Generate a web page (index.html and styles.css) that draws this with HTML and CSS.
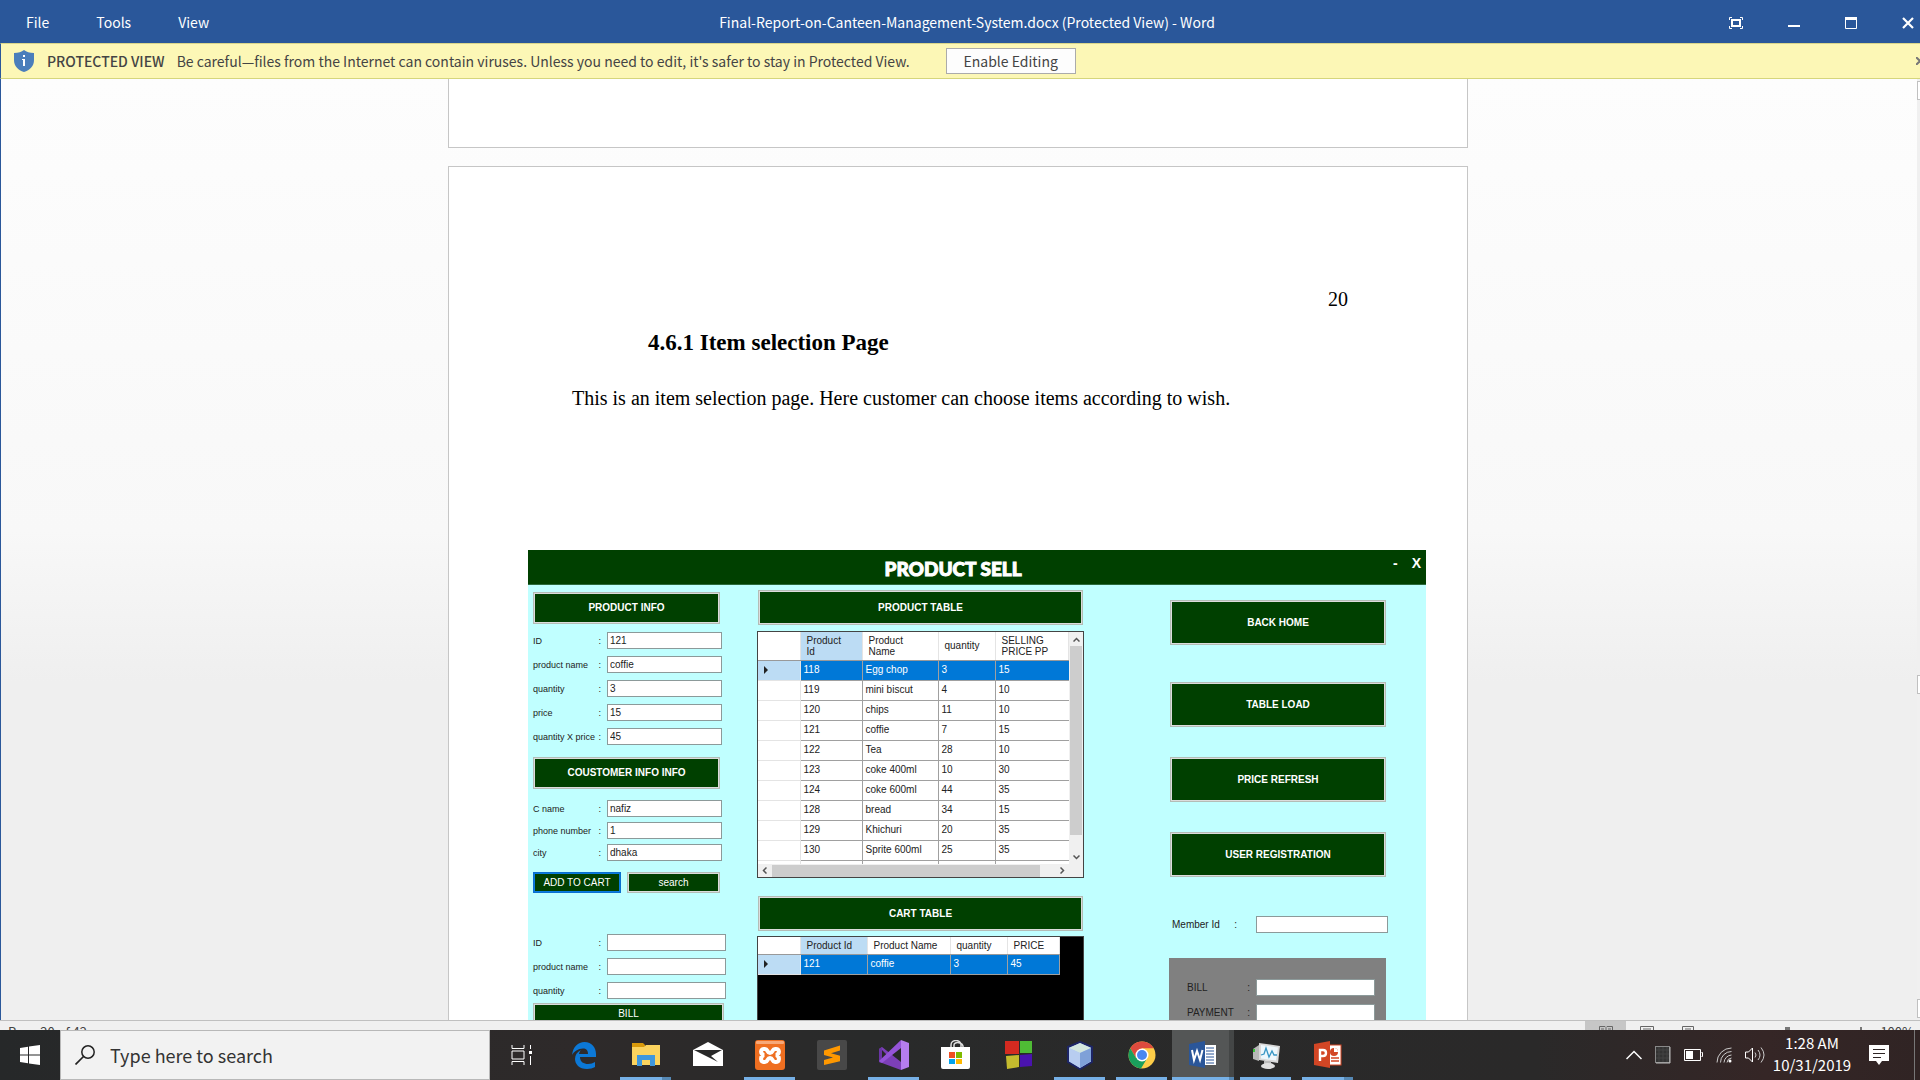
FILE: index.html
```html
<!DOCTYPE html>
<html lang="en">
<head>
<meta charset="utf-8">
<title>Final-Report-on-Canteen-Management-System.docx (Protected View) - Word</title>
<link rel="stylesheet" href="styles.css">
</head>
<body>
<div class="word">
  <header class="titlebar">
    <nav class="menu">
      <button type="button">File</button>
      <button type="button">Tools</button>
      <button type="button">View</button>
    </nav>
    <h1 class="doc-name">Final-Report-on-Canteen-Management-System.docx (Protected View) - Word</h1>
    <div class="win-controls">
      <button type="button" aria-label="Full screen"><svg width="14" height="12" viewBox="0 0 14 12"><path d="M0.5 3V.5H3M11 .5h2.500V3M13.500 9v2.500H11M3 11.500H.5V9" fill="none" stroke="#fff"/><rect x="3" y="3" width="8" height="6" fill="none" stroke="#fff" stroke-width="2"/></svg></button>
      <button type="button" aria-label="Minimize"><svg width="12" height="12" viewBox="0 0 12 12"><rect y="8" width="12" height="2" fill="#fff"/></svg></button>
      <button type="button" aria-label="Maximize"><svg width="12" height="12" viewBox="0 0 12 12"><path d="M.5 2v9.500h11V2" fill="none" stroke="#fff"/><rect width="12" height="3" fill="#fff"/></svg></button>
      <button type="button" aria-label="Close"><svg width="12" height="12" viewBox="0 0 12 12"><path d="M1 1l10 10M11 1L1 11" stroke="#fff" stroke-width="2.200"/></svg></button>
    </div>
  </header>

  <div class="message-bar">
    <svg class="shield" width="20" height="22" viewBox="0 0 20 22"><path d="M10 0c2.500 2 5.500 3 10 3v7c0 6-4 10-10 12C4 20 0 16 0 10V3c4.500 0 7.500-1 10-3z" fill="#4a7ebb"/><rect x="9" y="5" width="2" height="2" fill="#fff"/><path d="M8 9h3v7H9v-6H8z" fill="#fff"/></svg>
    <strong>PROTECTED VIEW</strong>
    <span class="warning">Be careful—files from the Internet can contain viruses. Unless you need to edit, it's safer to stay in Protected View.</span>
    <button type="button" class="enable">Enable Editing</button>
    <button type="button" class="dismiss" aria-label="Dismiss"><svg width="8" height="8" viewBox="0 0 8 8"><path d="M0 0l8 8M8 0L0 8" stroke="#777" stroke-width="2"/></svg></button>
  </div>

  <div class="workspace">
    <main class="pages">
      <section class="page page-end"></section>
      <section class="page">
        <p class="page-number">20</p>
        <h2>4.6.1 Item selection Page</h2>
        <p class="body-text">This is an item selection page. Here customer can choose items according to wish.</p>

        <div class="app">
          <div class="app-title">
            <h3>PRODUCT SELL</h3>
            <div class="app-controls"><button type="button">-</button><button type="button">X</button></div>
          </div>
          <div class="app-body">
            <div class="col-left">
              <button type="button" class="btn banner">PRODUCT INFO</button>
              <div class="fields loose">
                <label for="p-id">ID<span>:</span></label><input id="p-id" value="121">
                <label for="p-name">product name<span>:</span></label><input id="p-name" value="coffie">
                <label for="p-qty">quantity<span>:</span></label><input id="p-qty" value="3">
                <label for="p-price">price<span>:</span></label><input id="p-price" value="15">
                <label for="p-total">quantity X price<span>:</span></label><input id="p-total" value="45">
              </div>
              <button type="button" class="btn banner">COUSTOMER INFO INFO</button>
              <div class="fields">
                <label for="c-name">C name<span>:</span></label><input id="c-name" value="nafiz">
                <label for="c-phone">phone number<span>:</span></label><input id="c-phone" value="1">
                <label for="c-city">city<span>:</span></label><input id="c-city" value="dhaka">
              </div>
              <div class="actions">
                <button type="button" class="btn small focused">ADD TO CART</button>
                <button type="button" class="btn small">search</button>
              </div>
              <div class="fields loose wide">
                <label for="b-id">ID<span>:</span></label><input id="b-id">
                <label for="b-name">product name<span>:</span></label><input id="b-name">
                <label for="b-qty">quantity<span>:</span></label><input id="b-qty">
              </div>
              <button type="button" class="btn small bill">BILL</button>
            </div>

            <div class="col-mid">
              <button type="button" class="btn banner">PRODUCT TABLE</button>
              <div class="grid">
                <div class="grid-view">
                  <table class="products">
                    <colgroup><col class="w-head"><col class="w-id"><col class="w-name"><col class="w-qty"><col></colgroup>
                    <thead><tr><th></th><th class="sel">Product<br>Id</th><th>Product<br>Name</th><th>quantity</th><th>SELLING<br>PRICE PP</th></tr></thead>
                    <tbody>
                      <tr class="active"><th><i class="marker"></i></th><td>118</td><td>Egg chop</td><td>3</td><td>15</td></tr>
                      <tr><th></th><td>119</td><td>mini biscut</td><td>4</td><td>10</td></tr>
                      <tr><th></th><td>120</td><td>chips</td><td>11</td><td>10</td></tr>
                      <tr><th></th><td>121</td><td>coffie</td><td>7</td><td>15</td></tr>
                      <tr><th></th><td>122</td><td>Tea</td><td>28</td><td>10</td></tr>
                      <tr><th></th><td>123</td><td>coke 400ml</td><td>10</td><td>30</td></tr>
                      <tr><th></th><td>124</td><td>coke 600ml</td><td>44</td><td>35</td></tr>
                      <tr><th></th><td>128</td><td>bread</td><td>34</td><td>15</td></tr>
                      <tr><th></th><td>129</td><td>Khichuri</td><td>20</td><td>35</td></tr>
                      <tr><th></th><td>130</td><td>Sprite 600ml</td><td>25</td><td>35</td></tr>
                      <tr><th></th><td></td><td></td><td></td><td></td></tr>
                    </tbody>
                  </table>
                  <div class="vbar">
                    <svg width="7" height="5" viewBox="0 0 7 5"><path d="M.5 4.500l3-3 3 3" fill="none" stroke="#555" stroke-width="1.500"/></svg>
                    <div class="vthumb"></div>
                    <svg width="7" height="5" viewBox="0 0 7 5"><path d="M.5 .5l3 3 3-3" fill="none" stroke="#555" stroke-width="1.500"/></svg>
                  </div>
                </div>
                <div class="hbar">
                  <svg width="5" height="7" viewBox="0 0 5 7"><path d="M4.500 .5l-3 3 3 3" fill="none" stroke="#555" stroke-width="1.500"/></svg>
                  <div class="hthumb"></div>
                  <svg width="5" height="7" viewBox="0 0 5 7"><path d="M.5 .5l3 3-3 3" fill="none" stroke="#555" stroke-width="1.500"/></svg>
                </div>
              </div>
              <button type="button" class="btn banner">CART TABLE</button>
              <div class="grid cart-grid">
                <table class="cart">
                  <colgroup><col class="w-head"><col class="w-cid"><col class="w-cname"><col class="w-qty"><col></colgroup>
                  <thead><tr><th></th><th class="sel">Product Id</th><th>Product Name</th><th>quantity</th><th>PRICE</th></tr></thead>
                  <tbody><tr class="active"><th><i class="marker"></i></th><td>121</td><td>coffie</td><td>3</td><td>45</td></tr></tbody>
                </table>
              </div>
            </div>

            <div class="col-right">
              <button type="button" class="btn nav">BACK HOME</button>
              <button type="button" class="btn nav">TABLE LOAD</button>
              <button type="button" class="btn nav">PRICE REFRESH</button>
              <button type="button" class="btn nav">USER REGISTRATION</button>
              <div class="member"><label for="m-id">Member Id<span>:</span></label><input id="m-id"></div>
              <div class="payment">
                <label for="bill">BILL<span>:</span></label><input id="bill">
                <label for="pay">PAYMENT<span>:</span></label><input id="pay">
              </div>
            </div>
          </div>
        </div>
      </section>
    </main>
    <div class="scrollbar"><div class="s-btn"></div><div class="s-btn thumb"></div><div class="s-btn"></div></div>
  </div>

  <div class="status">
    <div class="status-row">
      <span class="status-page">Page 20 of 42</span>
      <span class="view-btn on"><svg width="14" height="12" viewBox="0 0 14 12"><path d="M.5 1.500H6l1 1 1-1h5.500V11H.5zM7 3v8M2 4h3M9 4h3" fill="none" stroke="#666"/></svg></span>
      <span class="view-btn"><svg width="14" height="12" viewBox="0 0 14 12"><path d="M.5 1.500h13V11H.5zM3 4h8" fill="none" stroke="#666"/></svg></span>
      <span class="view-btn"><svg width="12" height="12" viewBox="0 0 12 12"><path d="M.5 1.500h11V11H.5zM3 4h6" fill="none" stroke="#666"/></svg></span>
      <span class="zoom"><i class="knob"></i><i class="plus"></i></span>
      <span class="percent">100%</span>
    </div>
  </div>
</div>

<footer class="taskbar">
  <button type="button" class="start" aria-label="Start"><svg width="20" height="20" viewBox="0 0 20 20"><path d="M0 3l8-1.200V9.500H0zM9 1.600L20 0v9.500H9zM0 10.500h8v7.700L0 17zM9 10.500h11V20L9 18.400z" fill="#fff"/></svg></button>
  <label class="search">
    <svg width="20" height="20" viewBox="0 0 20 20"><circle cx="13" cy="7" r="6.200" fill="none" stroke="#222" stroke-width="1.500"/><path d="M8.500 11.500L.5 19.500" stroke="#222" stroke-width="1.700"/></svg>
    <input type="text" placeholder="Type here to search" aria-label="Search">
  </label>
  <button type="button" class="task" aria-label="Task View"><svg width="22" height="20" viewBox="0 0 22 20"><path d="M1 0v3.500h12V0M1 20v-3.500h12V20M1 6h12v8H1zM19.500 0v4M19.500 11v9" fill="none" stroke="#fff"/><rect x="18" y="6" width="3" height="3" fill="#fff"/></svg></button>
  <button type="button" class="task" aria-label="Edge"><svg width="30" height="30" viewBox="0 0 30 30"><path d="M3 15C4 7 9 2 15.500 2 23 2 27 8 27 14v3H11c0 5 4 7 8 7 3 0 5-.8 7-2v5c-2 1.300-5 2-8 2-8 0-12-5-12-10 0-4 2-7 6-9-1 1-1.600 2.300-2 4h9c0-4-2-5.500-5-5.500-5 0-9 3-11 6.500z" fill="#0c78d6"/></svg></button>
  <button type="button" class="task open multi" aria-label="File Explorer"><svg width="30" height="30" viewBox="0 0 30 30"><path d="M1 3h11l2 2v4H1z" fill="#d99a0b"/><path d="M1 7h12l2-2h14v20H1z" fill="#fbd35e"/><path d="M6 26V15h18v11h-5v-6h-8v6z" fill="#3f97dd"/></svg></button>
  <button type="button" class="task" aria-label="Mail"><svg width="30" height="30" viewBox="0 0 30 30"><path d="M0 10l15-8 15 8v16H0z" fill="#fff"/><path d="M1 10h28l-11 6 7 6L1 10z" fill="#282828"/></svg></button>
  <button type="button" class="task open" aria-label="XAMPP"><svg width="30" height="30" viewBox="0 0 30 30"><rect width="30" height="30" rx="3" fill="#ef6f21"/><rect x="1" y="1" width="28" height="3" rx="1" fill="#f7a878"/><path d="M10 9c-5-1-5 5-1 6-4 1-4 8 1 7 3 0 2-4 5-4s2 4 5 4c5 1 5-6 1-7 4-1 4-7-1-6-3 0-2 4-5 4s-2-4-5-4z" fill="none" stroke="#fff" stroke-width="4"/></svg></button>
  <button type="button" class="task" aria-label="Sublime Text"><svg width="30" height="30" viewBox="0 0 30 30"><rect width="30" height="30" rx="2" fill="#484848"/><path d="M7 10.500L23 5.500v5l-9 2.800 9 2.500v5.500L7 25v-5l9-2.500-9-2.500z" fill="#ff9800"/></svg></button>
  <button type="button" class="task open" aria-label="Visual Studio"><svg width="30" height="30" viewBox="0 0 30 30"><path d="M0 9l3-2 19 15V30L3 23l-3-1z" fill="#7c3fb8"/><path d="M0 9l3-2v16l-3-1z" fill="#6a35a5"/><path d="M3 10l5 5-5 5z" fill="#282828"/><path d="M3 23L22 8V0L0 21z" fill="#9554d8"/><path d="M22 0l8 3v24l-8 3z" fill="#b57dee"/><path d="M22 9v12l-8-6z" fill="#282828"/></svg></button>
  <button type="button" class="task" aria-label="Store"><svg width="30" height="30" viewBox="0 0 30 30"><path d="M10 9V5c0-6 10-6 10 0v4M13 9V5c0-4 10-3 9 3" fill="none" stroke="#ddd" stroke-width="1.500"/><path d="M0 7h29v20q0 2-2 2H2q-2 0-2-2z" fill="#fff"/><path d="M8 12h6v6H8z" fill="#f04e23"/><path d="M15 12h6v6h-6z" fill="#7fba00"/><path d="M8 19h6v5H8z" fill="#00a3ee"/><path d="M15 19h6v5h-6z" fill="#ffb900"/></svg></button>
  <button type="button" class="task" aria-label="Code Blocks"><svg width="30" height="30" viewBox="0 0 30 30"><path d="M2 1h14v13H2z" fill="#d42a20"/><path d="M17 1h12v12H17z" fill="#4fbb35"/><path d="M3 16l13-1v12L4 29z" fill="#c4bb2e"/><path d="M17 15l12-1v12l-12 1z" fill="#4a13ae"/></svg></button>
  <button type="button" class="task open" aria-label="NetBeans"><svg width="30" height="30" viewBox="0 0 30 30"><path d="M15 2l12 5v15l-12 7-12-7V7z" fill="#a9c6ee" stroke="#1d2565" stroke-width="2"/><path d="M15 3l11 5-11 5L4 8z" fill="#d3e6df"/><path d="M4 8l11 5v15L4 21z" fill="#b8cdf0"/><path d="M26 8l-11 5v15l11-7z" fill="#7fa1d8"/></svg></button>
  <button type="button" class="task open" aria-label="Chrome"><svg width="30" height="30" viewBox="0 0 30 30"><circle cx="15" cy="15" r="13.500" fill="#fdcd48"/><path d="M15 1.500A13.500 13.500 0 0 1 26.700 8.200H15L9 18 3.300 8.200A13.500 13.500 0 0 1 15 1.500z" fill="#dd4b3e"/><path d="M3.300 8.200A13.500 13.500 0 0 0 14 28.500L20 18.500 15 15 9 18z" fill="#1a9f5c"/><circle cx="15" cy="15" r="6.500" fill="#fff"/><circle cx="15" cy="15" r="5" fill="#4a87f0"/></svg></button>
  <button type="button" class="task current" aria-label="Word"><svg width="30" height="30" viewBox="0 0 30 30"><rect x="15" y="5" width="13" height="20" fill="#fff"/><path d="M18 8h8M18 11h8M18 14h8M18 17h8M18 20h8M18 23h8" stroke="#2a5699"/><path d="M1 4l16-3v27L1 25z" fill="#2a5699"/><path d="M4 10l2 10 3-9 3 9 2.500-10" fill="none" stroke="#fff" stroke-width="2"/></svg></button>
  <button type="button" class="task open" aria-label="System monitor"><svg width="30" height="30" viewBox="0 0 30 30"><path d="M2 9l6-4v16l-6-2z" fill="#b8b8b8"/><rect x="2" y="9" width="2" height="3" fill="#39c439"/><path d="M8 3l21 3-2 17-19-3z" fill="#d9d9d9"/><path d="M10 5l17 2.500-2 13-15-2z" fill="#eef7fc"/><path d="M10 15l3-1 2-6 3 9 3-6 2 4 3 0" fill="none" stroke="#3795c4" stroke-width="1.300"/><path d="M13 21h7v4h-7z" fill="#bbb"/><ellipse cx="17" cy="26" rx="7" ry="3" fill="#e0e0e0"/></svg></button>
  <button type="button" class="task open multi" aria-label="PowerPoint"><svg width="30" height="30" viewBox="0 0 30 30"><rect x="15" y="5" width="13" height="20" fill="#fff" stroke="#d24625"/><path d="M18 18h8M18 21h8" stroke="#d24625" stroke-width="1.500"/><circle cx="21" cy="12" r="4" fill="#d24625"/><path d="M21 12V8a4 4 0 0 1 4 4z" fill="#fff"/><path d="M1 4l16-3v27L1 25z" fill="#d24625"/><path d="M7 21V10h3c4 0 4 6 0 6H7" fill="none" stroke="#fff" stroke-width="2.400"/></svg></button>

  <div class="tray">
    <svg width="16" height="10" viewBox="0 0 16 10"><path d="M.5 9L8 1.500 15.500 9" fill="none" stroke="#fff" stroke-width="1.500"/></svg>
    <svg width="16" height="18" viewBox="0 0 16 18"><rect x=".5" y=".5" width="14" height="16" fill="#333" stroke="#888"/><path d="M4 1v15M8 1v15M12 1v15M1 4h13M1 8h13M1 12h13" stroke="#444"/><path d="M15 1v16H1" fill="none" stroke="#bbb"/></svg>
    <svg width="19" height="12" viewBox="0 0 19 12"><path d="M.5 .5h16v11H.5zM17.500 3.500h1v4h-1" fill="none" stroke="#fff"/><rect x="2" y="2" width="7" height="8" fill="#fff"/></svg>
    <svg width="16" height="16" viewBox="0 0 16 16"><path d="M1 15.500A14.500 14.500 0 0 1 15.500 1M4.500 15.500A11 11 0 0 1 15.500 4.500M8 15.500A8 8 0 0 1 15.500 8M11 15.500A5 5 0 0 1 15.500 11" fill="none" stroke="#ccc"/><circle cx="14" cy="14" r="1.500" fill="#fff"/></svg>
    <svg width="20" height="18" viewBox="0 0 20 18"><path d="M.5 6h3l4-4v14l-4-4h-3z" fill="none" stroke="#fff"/><path d="M10 6.500q2 2.500 0 5M13 4q4 5 0 10M16 1.500q6 7.500 0 15" fill="none" stroke="#ccc"/></svg>
  </div>
  <div class="clock"><span>1:28 AM</span><span>10/31/2019</span></div>
  <button type="button" class="notify" aria-label="Notifications"><svg width="20" height="20" viewBox="0 0 20 20"><path d="M0 0h20v16h-7l-3 4-3-4H0z" fill="#fff"/><path d="M4 4.500h12M4 8.500h12M4 12.500h8" stroke="#2e2525"/></svg></button>
</footer>
</body>
</html>
```
FILE: styles.css
```css
* { box-sizing: border-box; }

html, body { height: 100%; }

body {
  margin: 0;
  display: flex;
  flex-direction: column;
  overflow: hidden;
  font-family: "Noto Sans CJK SC", "Open Sans", sans-serif;
  font-size: 14px;
  color: #444;
}

button, input { font: inherit; color: inherit; margin: 0; }
button { padding: 0; border: 0; background: none; white-space: nowrap; }
svg { display: block; flex: none; }

/* Word window */
.word { flex: 1; min-height: 0; display: flex; flex-direction: column; }

.titlebar {
  flex: none;
  height: 43px;
  display: grid;
  grid-template-columns: 1fr auto 1fr;
  align-items: center;
  padding: 2px 6px 0 20px;
  background: #2a579a;
  color: #fff;
}
.menu { display: flex; gap: 47px; padding: 0 0 2px 6px; }
.doc-name { margin: 0; padding-bottom: 2px; font-size: 14px; font-weight: 400; }
.win-controls { display: flex; justify-content: flex-end; gap: 45px; }

.message-bar {
  flex: none;
  height: 36px;
  display: flex;
  align-items: center;
  padding-left: 13px;
  background: #fcf7b6;
  border-top: 1px solid #d9d68c;
  border-bottom: 1px solid #d5d67c;
  border-left: 1px solid #2a579a;
  overflow: hidden;
}
.message-bar strong { margin: 0 12px 0 13px; font-weight: 500; white-space: nowrap; }
.warning { white-space: nowrap; }
.enable {
  width: 130px;
  height: 26px;
  margin-left: 36px;
  background: #fdfdfd;
  border: 1px solid #ababab;
}
.dismiss { margin: 0 -4px 0 auto; }

.workspace {
  flex: 1;
  min-height: 0;
  display: flex;
  overflow: hidden;
  border-left: 1px solid #2a579a;
  background: linear-gradient(#fdfdfd, #f8f8f8 48%, #efefef 64%, #efefef);
}
.pages { flex: 1; min-width: 0; padding-right: 2px; }
.page {
  width: 100%;
  max-width: 1020px;
  margin: 0 auto 18px;
  background: #fff;
  border: 1px solid #c6c6c6;
  color: #000;
  font-family: "Liberation Serif", serif;
  font-size: 20px;
  line-height: 24px;
}
.page-end { height: 69px; border-top: 0; }
.page-number { margin: 120px 119px 0; text-align: right; }
.page h2 { margin: 19px 0 0 199px; font-size: 23px; line-height: 26px; }
.body-text { margin: 30px 0 0 123px; }

.scrollbar {
  flex: none;
  width: 3px;
  padding: 2px 0;
  display: flex;
  flex-direction: column;
  justify-content: space-between;
  background: #f0f0f0;
}
.s-btn { height: 19px; background: #fff; border: 1px solid #c0c0c0; border-right: 0; }
.s-btn.thumb { margin-top: 270px; }

/* Canteen application inside the page */
.app {
  width: 898px;
  margin: 140px 0 80px 79px;
  background: #c0ffff;
  color: #222;
  font-family: "Liberation Sans", sans-serif;
  font-size: 10px;
  line-height: 12px;
}
.app-title {
  height: 35px;
  display: grid;
  grid-template-columns: 100fr auto 112fr;
  align-items: center;
  padding-right: 5px;
  background: #004000;
  border-bottom: 1px solid #2c6a3c;
  color: #fff;
}
.app-title h3 {
  grid-column: 2;
  margin: 0;
  padding-top: 4px;
  font-family: Lato, sans-serif;
  font-weight: 900;
  font-size: 19px;
  line-height: 24px;
  -webkit-text-stroke: 1px #fff;
}
.app-controls {
  display: flex;
  justify-content: flex-end;
  gap: 14px;
  padding-bottom: 8px;
  font-weight: 700;
  font-size: 14px;
}
.app-body { display: flex; padding: 7px 38px 40px 5px; }

.btn {
  display: block;
  background: #004000;
  border: 1px solid #b4bcb6;
  box-shadow: inset 0 0 0 1px #dcdcdc;
  color: #fff;
}
.banner, .nav { font-weight: 700; }

.col-left { width: 193px; }
.col-left .banner { width: 187px; height: 32px; }
.fields {
  display: grid;
  grid-template-columns: 74px 115px;
  grid-auto-rows: 17px;
  row-gap: 5px;
  margin: 11px 0;
}
.fields.loose { row-gap: 7px; margin: 8px 0 12px; }
.fields.wide { grid-template-columns: 74px 119px; margin: 41px 0 4px; }
.app label { display: flex; justify-content: space-between; align-items: center; padding: 0 6px 0 2px; white-space: nowrap; }
.fields label { padding-left: 0; font-size: 9px; }
.app input {
  width: 100%;
  height: 17px;
  padding: 0 2px;
  border: 1px solid #8c9a9a;
  border-radius: 0;
  background: #fff;
  outline: 0;
}
.actions { display: grid; grid-template-columns: 88px 93px; gap: 6px; }
.small { height: 21px; }
.focused { border-color: #0a6fd0; box-shadow: inset 0 0 0 1px #0a7be0; }
.bill { width: 191px; }

.col-mid { width: 327px; margin: -2px 85px 0 31px; }
.col-mid .banner { width: 325px; height: 35px; margin: 0 1px; }
.grid { margin: 6px 0 18px; border: 1px solid #444; background: #fff; }
.grid-view { height: 232px; display: flex; overflow: hidden; }
.grid table { border-collapse: collapse; table-layout: fixed; }
.products { width: 311px; height: 248px; }
.cart { width: 302px; }
.w-head { width: 42px; }
.w-id { width: 62px; }
.w-name { width: 76px; }
.w-qty { width: 57px; }
.w-cid { width: 67px; }
.w-cname { width: 83px; }
.grid th, .grid td { padding: 0 3px; text-align: left; font-weight: 400; white-space: nowrap; }
.grid th { background: #fff; border-right: 1px solid #e4e4e4; border-bottom: 1px solid #e4e4e4; }
.grid thead th { height: 28px; padding: 0 6px; line-height: 11px; border-bottom: 1px solid #999; }
.grid td, .grid tbody th { height: 20px; }
.grid td { border: 1px solid #a0a0a0; }
.products td:last-child { border-right: 0; }
.grid .sel, .grid .active th { background: #bcdcf4; }
.grid .active td { background: #0078d7; color: #fff; }
.marker {
  display: block;
  width: 4px;
  margin-left: 3px;
  border: 4px solid transparent;
  border-left-color: #222;
  border-right: 0;
}
.vbar {
  flex: 1;
  display: flex;
  flex-direction: column;
  align-items: center;
  justify-content: space-between;
  padding: 5px 0 4px;
  background: #f0f0f0;
}
.vthumb { width: 12px; flex: 1; margin: 4px 0 20px; background: #cdcdcd; }
.hbar { height: 13px; display: flex; align-items: center; padding: 0 18px 0 4px; background: #f0f0f0; }
.hthumb { height: 12px; flex: 1; margin: 0 20px 0 5px; background: #cdcdcd; }
.col-mid .cart-grid { height: 120px; margin: 5px 0 0; background: #000; }
.cart-grid thead th { height: 17px; }

.col-right { width: 219px; display: flex; flex-direction: column; }
.nav { width: 216px; height: 45px; margin: 0 1px 30px; }
.nav:first-child { margin-top: 8px; margin-bottom: 37px; }
.nav:nth-child(4) { margin-bottom: 39px; }
.member { display: grid; grid-template-columns: 87px 1fr; }
.member label { padding: 0 19px 0 3px; }
.payment {
  display: grid;
  grid-template-columns: 69px 119px;
  row-gap: 8px;
  margin: 25px 2px 0 0;
  padding: 21px 0 20px 18px;
  background: #808080;
}
.payment label { padding: 0 6px 0 0; }

/* status strip, partly behind the taskbar */
.status { flex: none; height: 10px; overflow: hidden; background: #f0f0f0; border-top: 1px solid #c0c0c0; }
.status-row { height: 26px; display: flex; align-items: flex-start; padding: 0 6px 0 8px; font-size: 13px; line-height: 22px; }
.status-page { margin-right: auto; }
.view-btn { width: 41px; height: 26px; display: flex; justify-content: center; padding-top: 4px; }
.view-btn.on { background: #c6c6c6; }
.zoom { width: 154px; padding-top: 6px; display: flex; justify-content: flex-end; }
.knob { width: 5px; height: 14px; margin-right: 70px; background: #777; }
.plus { width: 2px; height: 11px; background: #777; }
.percent { margin-left: 18px; }

/* Windows taskbar */
.taskbar {
  flex: none;
  height: 50px;
  display: flex;
  align-items: center;
  padding-right: 5px;
  background: linear-gradient(90deg, #262829, #2e2a2a 30%, #292a2a 45%, #2a2929 80%, #352626 92%, #302424);
  color: #fff;
  font-size: 15px;
}
.start { width: 60px; height: 50px; display: flex; align-items: center; justify-content: center; }
.search {
  width: 430px;
  height: 50px;
  display: flex;
  align-items: center;
  gap: 15px;
  padding: 0 14px;
  background: #f2f2f2;
  border: 1px solid #b8b8b8;
}
.search input { flex: 1; min-width: 0; padding: 0; border: 0; background: none; font-size: 18px; outline: 0; }
.search input::placeholder { color: #333; opacity: 1; }
.task {
  width: 51px;
  height: 50px;
  margin: 0 5px 0 6px;
  display: flex;
  align-items: center;
  justify-content: center;
  border-bottom: 3px solid transparent;
  border-top: 3px solid transparent;
}
.task.open { border-bottom-color: #76b0e6; }
.task.open.multi { border-image: linear-gradient(90deg, #76b0e6 78%, #5688b4 78%) 3 / 0 0 3px; }
.task.current {
  width: 62px;
  margin: 0;
  border: 0;
  background:
    linear-gradient(90deg, #76b0e6 92%, #5688b4 92%) bottom / 100% 3px no-repeat,
    linear-gradient(90deg, #545656 92%, #444646 92%);
}
.tray { display: flex; align-items: center; gap: 13px; margin: 0 4px 0 auto; }
.clock {
  width: 86px;
  padding-bottom: 2px;
  display: flex;
  flex-direction: column;
  align-items: center;
  line-height: 22px;
}
.notify { width: 60px; height: 50px; padding-left: 14px; display: flex; align-items: center; border-right: 1px solid #777; }
```
